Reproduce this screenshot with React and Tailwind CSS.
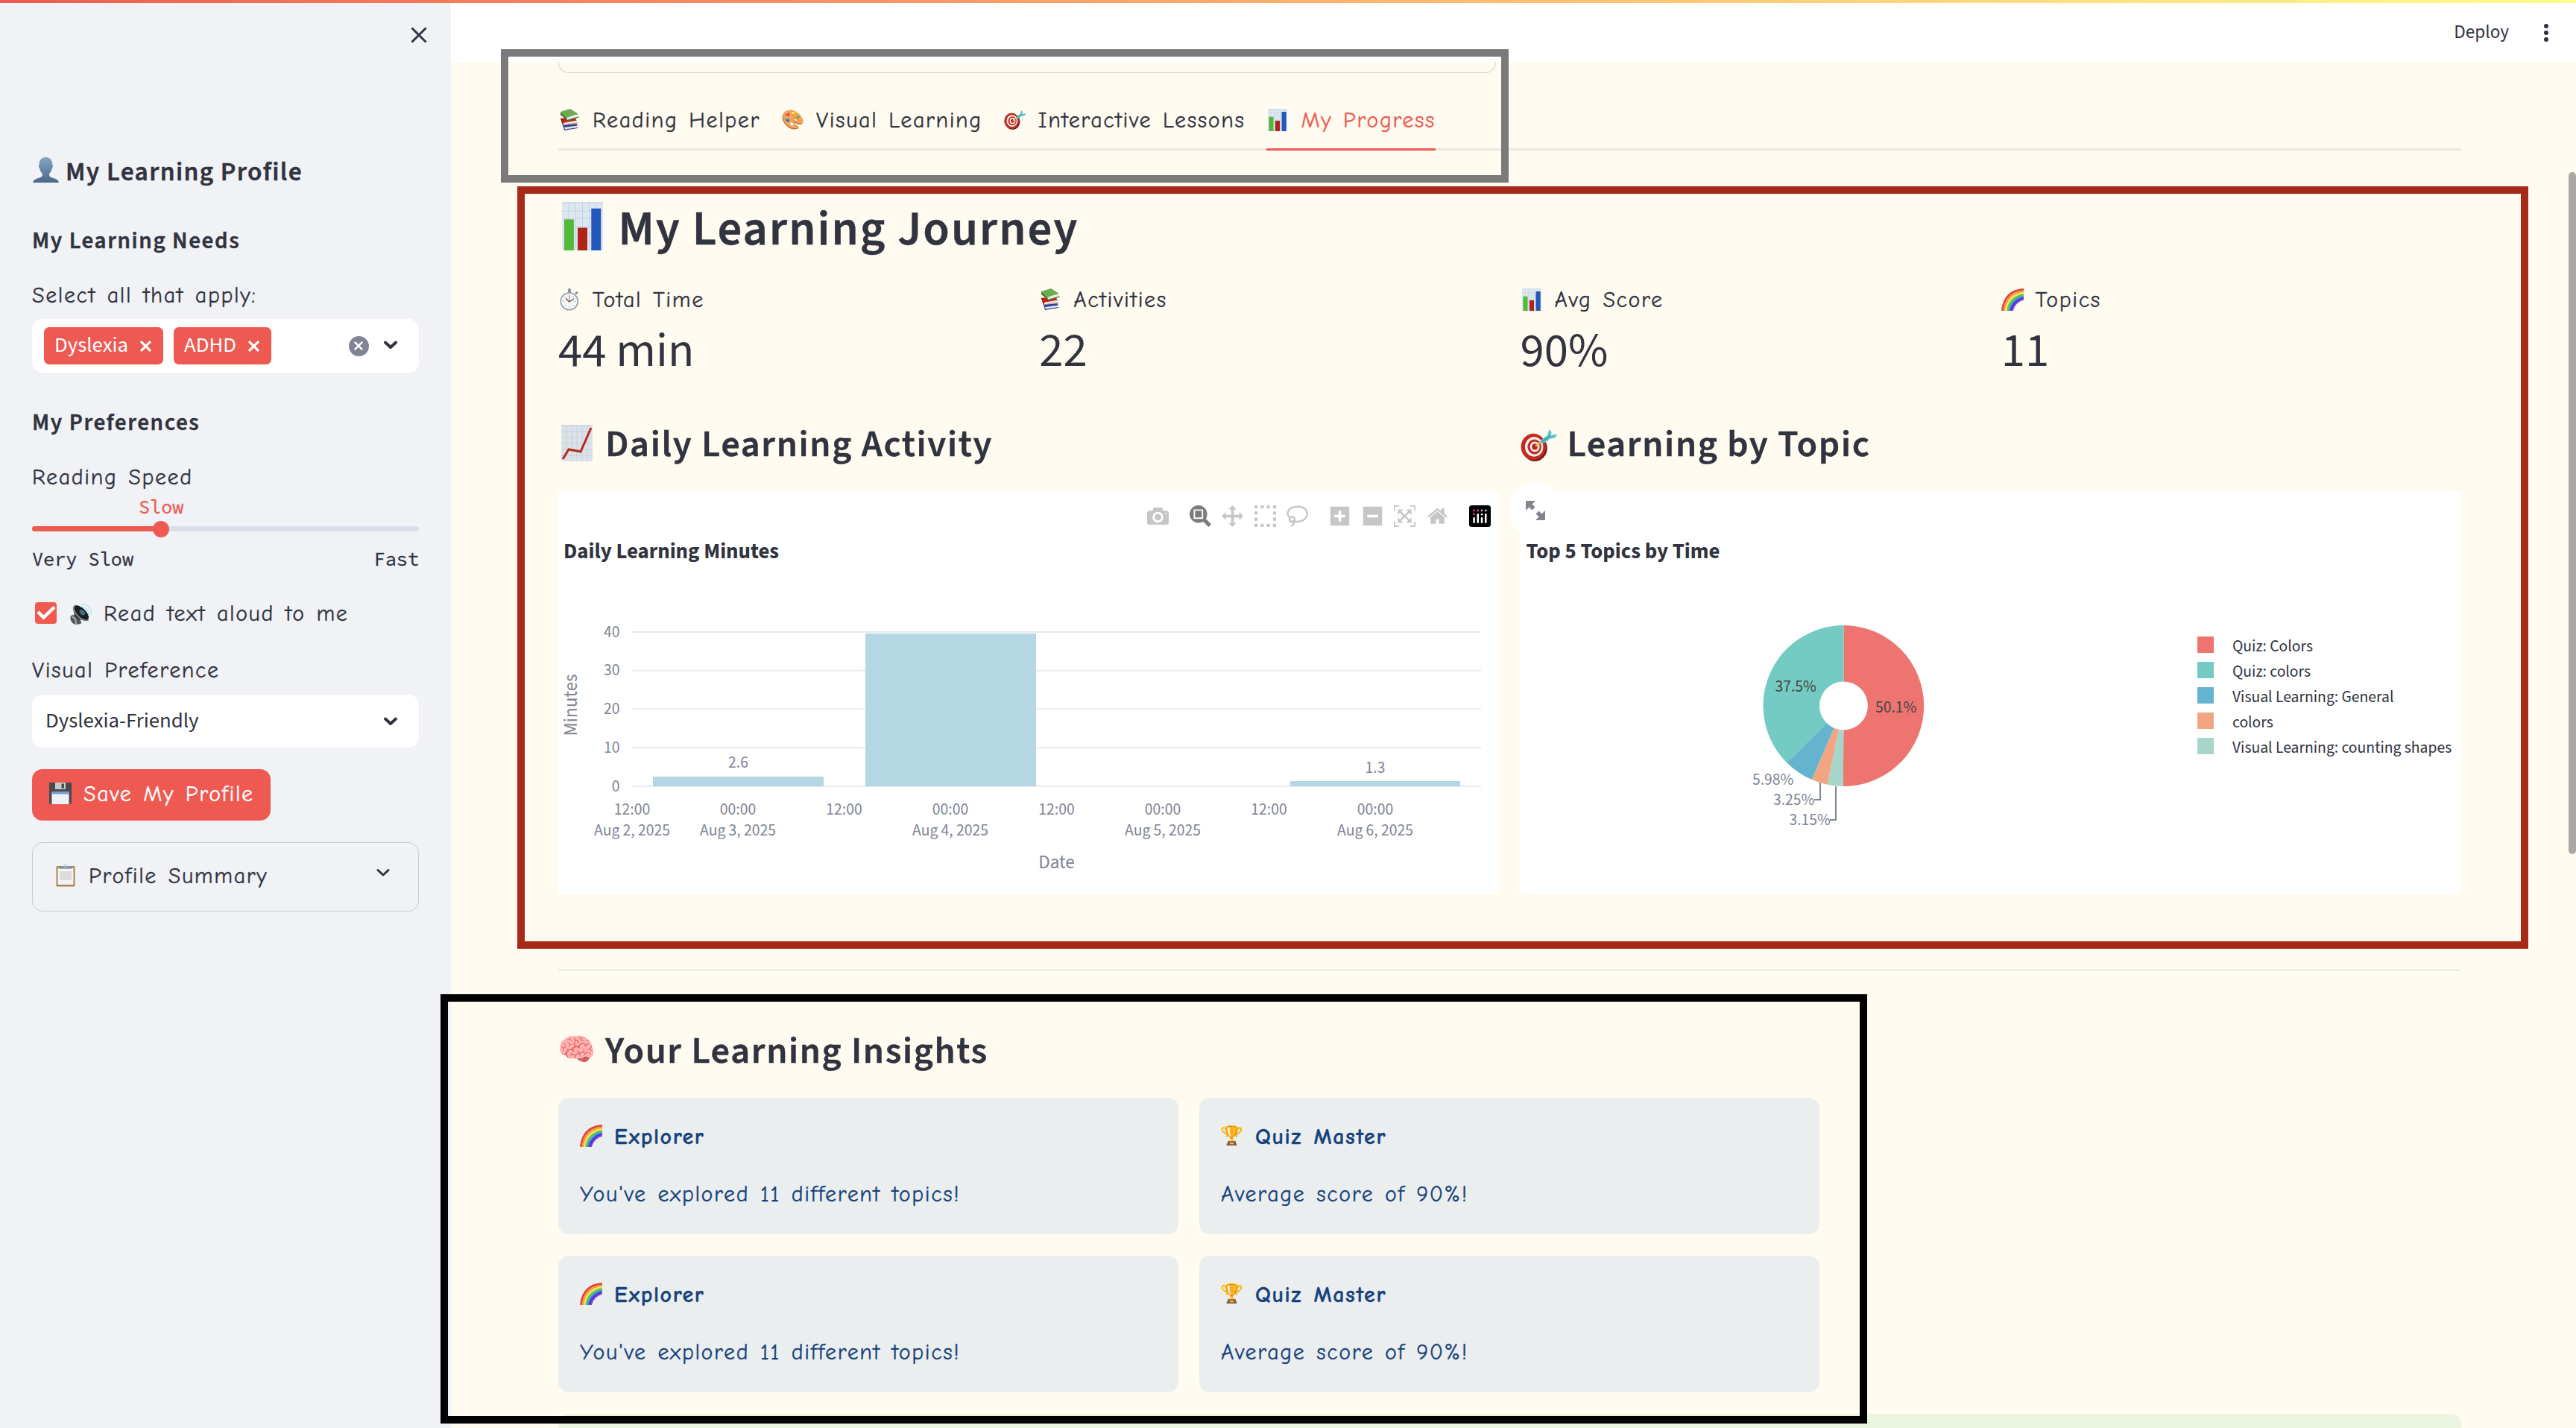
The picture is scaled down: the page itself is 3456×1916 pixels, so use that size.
import React from "react";

const COMIC = "font-['Comic_Neue','Lato',sans-serif] text-[30px] leading-[40px] tracking-[1.6px] [word-spacing:3.2px] [-webkit-text-stroke:0.3px] whitespace-nowrap";
const SANS = "font-['Source_Sans_3','Noto_Sans_CJK_SC',sans-serif] whitespace-nowrap";
const TITLE = SANS + " font-semibold [-webkit-text-stroke:0.4px]";
const MONO = "font-['Source_Code_Pro','Liberation_Mono',monospace] text-[25.2px] leading-[30px] whitespace-nowrap [-webkit-text-stroke:0.3px]";

/* ---------- emoji drawings ---------- */
function Bars({ className }) {
  return (
    <svg viewBox="0 0 28 32" className={className} preserveAspectRatio="none">
      <rect x="0" y="0" width="28" height="32" fill="#dfe7ee" />
      <path d="M0 .5H28M0 6H28M0 11H28M0 16H28M0 21H28M0 26H28M4.6 0V32M9.3 0V32M14 0V32M18.6 0V32M23.3 0V32" stroke="#bdd3e6" strokeWidth=".5" />
      <rect x="1.5" y="11.5" width="6.6" height="20.5" fill="#52b93a" />
      <rect x="10.7" y="17" width="6.6" height="15" fill="#b02318" />
      <rect x="20" y="4.3" width="6.6" height="27.7" fill="#2358b8" />
    </svg>
  );
}
function ChartUp({ className }) {
  return (
    <svg viewBox="0 0 42 49" className={className}>
      <rect width="42" height="49" fill="#dbe2ea" />
      <path d="M0 1H42M0 9H42M0 17H42M0 25H42M0 33H42M0 41H42M7 0V49M14 0V49M21 0V49M28 0V49M35 0V49" stroke="#c3cfdb" strokeWidth=".8" />
      <path d="M2 46 10 33 26 36 40 4" fill="none" stroke="#b52a1e" strokeWidth="3" />
    </svg>
  );
}
function Target({ className }) {
  return (
    <svg viewBox="0 0 50 44" className={className}>
      <ellipse cx="19" cy="26" rx="17" ry="18" fill="#7d1a14" />
      <ellipse cx="17" cy="24" rx="17" ry="18" fill="#c12c22" />
      <ellipse cx="18" cy="24" rx="12.5" ry="13.5" fill="#f7efec" />
      <ellipse cx="18.5" cy="24" rx="9.5" ry="10.2" fill="#c12c22" />
      <ellipse cx="19" cy="24" rx="6.6" ry="7" fill="#f7efec" />
      <ellipse cx="19" cy="24" rx="3.8" ry="4.2" fill="#b0251c" />
      <path d="M20 23 28 17" stroke="#e6c545" strokeWidth="2.4" />
      <path d="M26 19C27 14 32 11 36 9L39 0 42 4 41 8 49 7C50 11 44 13 39 13 36 17 31 20 26 19Z" fill="#5fc3cb" />
      <path d="M29 17 40 9" stroke="#2f8f9c" strokeWidth="1.2" />
    </svg>
  );
}
function Person({ className }) {
  return (
    <svg viewBox="0 0 35 34" className={className}>
      <defs>
        <linearGradient id="person" x1="0" y1="0" x2="0" y2="1">
          <stop offset="0" stopColor="#86a6c4" />
          <stop offset="1" stopColor="#4a678b" />
        </linearGradient>
      </defs>
      <path d="M17.5 0C23.5 0 26.5 4 26.3 10 27.5 10.5 27 14 25.8 15 25 19 23 21 22 22.5 22 25.5 23 26.5 26 27.5 31 29 34 30 35 34H0C1 30 4 29 9 27.5 12 26.5 13 25.5 13 22.5 12 21 10 19 9.2 15 8 14 7.5 10.5 8.7 10 8.5 4 11.5 0 17.5 0Z" fill="url(#person)" />
    </svg>
  );
}
function Speaker({ className }) {
  return (
    <svg viewBox="0 0 30 30" className={className}>
      <path d="M1 17C4 14 9 17 13 20L16 27C11 30 5 29 3 26 0 23 0 19 1 17Z" fill="#56575a" />
      <path d="M2.5 18.5C6 18 9 23 8 28" stroke="#b9babd" strokeWidth="1.8" fill="none" />
      <path d="M4 4 6 17 13 22 26 24Z" fill="#2c2e31" />
      <ellipse cx="15" cy="13" rx="14" ry="7" transform="rotate(45 15 13)" fill="#85898d" />
      <ellipse cx="15.8" cy="12.5" rx="12.7" ry="5.9" transform="rotate(45 15.8 12.5)" fill="#1b1e21" />
      <ellipse cx="17" cy="12" rx="4.5" ry="3" transform="rotate(45 17 12)" fill="#3a6f85" />
      <path d="M15 1C23-1 31 7 29 16M14 4C20 3 27 10 26 17" stroke="#b7e3ec" strokeWidth="1.3" fill="none" />
    </svg>
  );
}
function Floppy({ className }) {
  return (
    <svg viewBox="0 0 30 29" className={className}>
      <rect width="30" height="29" rx="1" fill="#4a4a4c" />
      <rect x="8" y="0" width="14" height="9" fill="#c9cacb" />
      <rect x="16.5" y="1.5" width="3.5" height="6" fill="#4a4a4c" />
      <rect x="3.5" y="12.5" width="23" height="16.5" fill="#eef1f5" />
      <rect x="3.5" y="12.5" width="23" height="3" fill="#6f9fdc" />
      <rect x="1" y="26" width="1.5" height="1.5" fill="#d34b3d" />
      <rect x="27.5" y="26" width="1.5" height="1.5" fill="#d34b3d" />
    </svg>
  );
}
function Clipboard({ className }) {
  return (
    <svg viewBox="0 0 26 30" className={className}>
      <rect x=".5" y="2" width="25" height="27.5" rx="1.5" fill="#a9854e" />
      <rect x="2.5" y="4.5" width="21" height="22.5" fill="#f4f4f4" />
      <path d="M5 9H21V21H5Z" fill="#dcdcdd" />
      <rect x="4" y="2" width="18" height="3.8" rx="1" fill="#8e9399" />
      <circle cx="13" cy="2" r="1.8" fill="none" stroke="#b3c3cf" strokeWidth="1" />
    </svg>
  );
}
function Books({ className }) {
  return (
    <svg viewBox="0 0 26 30" className={className}>
      <path d="M4 22 23 20 24 26 6 29Z" fill="#2e4390" />
      <path d="M6 25 24 22.5 24 25 7 27.5Z" fill="#e8e8ea" />
      <path d="M1 13 20 10 24 19 4 22Z" fill="#c3281e" />
      <path d="M4 19 24 15.5 24.5 18.5 5 21.5Z" fill="#ece9e4" />
      <path d="M1 13 4 22 5 20 3 13Z" fill="#8c1a13" />
      <path d="M1 4 14 0 25 7 9 12Z" fill="#6cab4f" />
      <path d="M9 12 25 7 25.5 10.5 10 15.5Z" fill="#eceee6" />
      <path d="M1 4 9 12 10 15.5 1 8Z" fill="#3f7a2c" />
      <path d="M9.5 15 25.5 10.3V11.5L10 16.5Z" fill="#3f7a2c" />
    </svg>
  );
}
function Stopwatch({ className }) {
  return (
    <svg viewBox="0 0 26 30" className={className}>
      <rect x="11" y="0" width="4" height="6" rx="1.5" fill="#8d949b" />
      <path d="M21 7 24 5" stroke="#7b8289" strokeWidth="2.5" />
      <circle cx="12.8" cy="17.3" r="12.3" fill="#9aa1a9" />
      <circle cx="12.8" cy="17.3" r="10.6" fill="#f5f6f8" />
      <path d="M12.8 8.500V10.500M12.8 24V26M4 17.3H6M19.6 17.3H21.6M6.6 11 8 12.4M19 11 17.6 12.4M6.6 23.6 8 22.2M19 23.6 17.6 22.2" stroke="#a8adb3" strokeWidth="1" />
      <path d="M12.8 18V9.5" stroke="#e08b5a" strokeWidth="1.2" />
      <path d="M8 13.5 12.8 18 19 14" stroke="#4b5056" strokeWidth="1.3" fill="none" />
    </svg>
  );
}
function Rainbow({ className }) {
  return (
    <svg viewBox="0 0 30 30" className={className} fill="none" strokeWidth="2.7">
      <path d="M1.3 30C3 13 12 2.5 30 1.3" stroke="#e24239" />
      <path d="M3.8 30C5.5 15 14 5 30 3.8" stroke="#f3973f" />
      <path d="M6.2 30C8 17 16 7.5 30 6.2" stroke="#f7e15a" />
      <path d="M8.6 30C10 19 17.5 10 30 8.6" stroke="#5ec944" />
      <path d="M11 30C12.5 21 19 12.5 30 11" stroke="#3c8fe8" />
      <path d="M13 30C14.5 22.5 20.5 14.5 30 13" stroke="#4a35d8" />
      <path d="M15 30C16 24 22 16.5 30 15" stroke="#8a3fd0" strokeWidth="1.6" />
    </svg>
  );
}
function Glyph({ children, className }) {
  return <span className={"font-['Noto_Color_Emoji'] flex items-center justify-center tracking-normal " + className}>{children}</span>;
}

/* ---------- small icons ---------- */
function Cross({ className, width }) {
  return (
    <svg viewBox="0 0 22 22" className={className} fill="none" stroke="currentColor" strokeWidth={width}>
      <path d="M1.5 1.5 20.5 20.5M20.5 1.5 1.5 20.5" />
    </svg>
  );
}
function Chevron({ className, width = 4 }) {
  return (
    <svg viewBox="0 0 20 12" className={className} fill="none" stroke="currentColor" strokeWidth={width} strokeLinecap="round" strokeLinejoin="round">
      <path d="M3 2.5 10 9 17 2.5" />
    </svg>
  );
}

/* ---------- chart toolbar ---------- */
function Tool({ d, w = 1000, active }) {
  return (
    <svg viewBox={`0 0 ${w} 1000`} className={active ? "w-[29px] h-[29px] fill-[#7b7b7c]" : "w-[29px] h-[29px] fill-[#c6c6c7]"}>
      <path d={d} transform="matrix(1 0 0 -1 0 850)" />
    </svg>
  );
}
const ICONS = {
  camera: "m500 450c-83 0-150-67-150-150 0-83 67-150 150-150 83 0 150 67 150 150 0 83-67 150-150 150z m400 150h-120c-16 0-34 13-39 29l-31 93c-6 15-23 28-40 28h-340c-16 0-34-13-39-28l-31-94c-6-15-23-28-40-28h-120c-55 0-100-45-100-100v-450c0-55 45-100 100-100h800c55 0 100 45 100 100v450c0 55-45 100-100 100z m-400-550c-138 0-250 112-250 250 0 138 112 250 250 250 138 0 250-112 250-250 0-138-112-250-250-250z m365 380c-19 0-35 16-35 35 0 19 16 35 35 35 19 0 35-16 35-35 0-19-16-35-35-35z",
  zoom: "m1000-25l-250 251c40 63 63 138 63 218 0 224-182 406-407 406-224 0-406-182-406-406s183-406 407-406c80 0 155 22 218 62l250-250 125 125z m-812 250l0 438 437 0 0-438-437 0z m62 375l313 0 0-312-313 0 0 312z",
  pan: "m1000 350l-187 188 0-125-250 0 0 250 125 0-188 187-187-187 125 0 0-250-250 0 0 125-188-188 186-187 0 125 252 0 0-250-125 0 187-188 188 188-125 0 0 250 250 0 0-126 187 188z",
  select: "m0 850l0-143 143 0 0 143-143 0z m286 0l0-143 143 0 0 143-143 0z m285 0l0-143 143 0 0 143-143 0z m286 0l0-143 143 0 0 143-143 0z m-857-286l0-143 143 0 0 143-143 0z m857 0l0-143 143 0 0 143-143 0z m-857-285l0-143 143 0 0 143-143 0z m857 0l0-143 143 0 0 143-143 0z m-857-286l0-143 143 0 0 143-143 0z m286 0l0-143 143 0 0 143-143 0z m285 0l0-143 143 0 0 143-143 0z m286 0l0-143 143 0 0 143-143 0z",
  plus: "m1 787l0-875 875 0 0 875-875 0z m687-500l-187 0 0-187-125 0 0 187-188 0 0 125 188 0 0 187 125 0 0-187 187 0 0-125z",
  minus: "m0 788l0-876 875 0 0 876-875 0z m688-500l-500 0 0 125 500 0 0-125z",
  auto: "m250 850l-187 0-63 0 0-62 0-188 63 0 0 188 187 0 0 62z m688 0l-188 0 0-62 188 0 0-188 62 0 0 188 0 62-62 0z m-875-938l0 188-63 0 0-188 0-62 63 0 187 0 0 62-187 0z m875 188l0-188-188 0 0-62 188 0 62 0 0 62 0 188-62 0z m-125 188l-1 0-93-94-156 156 156 156 92-93 2 0 0 250-250 0 0-2 93-92-156-156-156 156 94 92 0 2-250 0 0-250 0 0 93 93 157-156-157-156-93 94 0 0 0-250 250 0 0 0-94 93 156 157 156-157-93-93 0 0 250 0 0 250z",
  home: "m786 296v-267q0-15-11-26t-25-10h-214v214h-143v-214h-214q-15 0-25 10t-11 26v267q0 1 0 2t0 2l321 264 321-264q1-1 1-4z m124 39l-34-41q-5-5-12-6h-2q-7 0-12 3l-386 322-386-322q-7-4-13-4-7 2-12 7l-35 41q-4 5-3 13t6 12l401 334q18 15 42 15t43-15l136-114v109q0 8 5 13t13 5h107q8 0 13-5t5-13v-227l122-102q5-5 6-12t-4-13z",
};
function Toolbar() {
  return (
    <div className="absolute right-[12px] top-[19px] flex gap-[28px]">
      <Tool d={ICONS.camera} />
      <div className="flex gap-[14.5px]">
        <Tool d={ICONS.zoom} active />
        <Tool d={ICONS.pan} />
        <Tool d={ICONS.select} />
        <svg viewBox="0 0 29 29" className="h-[29px] w-[29px] fill-none stroke-[#c6c6c7]" strokeWidth="2.4">
          <path d="M6 17.5C2 15.5 1 11.5 2 8.5 4 3.5 10 1.5 16 1.7 23 2 28 6 27.7 11.5 27.4 18 21 22 14 22 11 22 9 21 7 20" />
          <circle cx="7.5" cy="19" r="3.6" />
          <path d="M10.5 21.5C11 24 9 26 6.5 28" />
        </svg>
      </div>
      <div className="flex gap-[14.5px]">
        <Tool d={ICONS.plus} w={875} />
        <Tool d={ICONS.minus} w={875} />
        <Tool d={ICONS.auto} />
        <Tool d={ICONS.home} w={928.571} />
      </div>
      <svg viewBox="0 0 29 29" className="h-[29px] w-[29px]">
        <rect width="29" height="29" rx="3.5" fill="#000" />
        <g fill="#e2467c">
          <circle cx="6.5" cy="7" r="1.4" />
          <circle cx="6.5" cy="12" r="1.4" />
          <circle cx="11.8" cy="7" r="1.4" />
        </g>
        <circle cx="17" cy="7" r="1.4" fill="#b9a3d6" />
        <circle cx="22.3" cy="7" r="1.4" fill="#8fd3f0" />
        <g fill="#fff">
          <rect x="5.3" y="16" width="2.5" height="8" rx="1.2" />
          <rect x="10.5" y="11" width="2.5" height="13" rx="1.2" />
          <rect x="15.8" y="16" width="2.5" height="8" rx="1.2" />
          <rect x="15.8" y="11" width="2.5" height="2.5" rx="1.2" />
          <rect x="21" y="11" width="2.5" height="13" rx="1.2" />
        </g>
      </svg>
    </div>
  );
}

/* ---------- charts ---------- */
const BARS = [
  { x: 127, w: 229, top: 383, label: "2.6", labelY: 371 },
  { x: 412, w: 229, top: 191 },
  { x: 982, w: 228, top: 389, label: "1.3", labelY: 378 },
];
const TICKS = [
  [99, "12:00", "Aug 2, 2025"],
  [241, "00:00", "Aug 3, 2025"],
  [383.5, "12:00"],
  [526, "00:00", "Aug 4, 2025"],
  [668.5, "12:00"],
  [811, "00:00", "Aug 5, 2025"],
  [953.5, "12:00"],
  [1096, "00:00", "Aug 6, 2025"],
];
const CHART = "block h-[540px] w-[1262px] font-['Source_Sans_3','Noto_Sans_CJK_SC',sans-serif]";
function BarChart() {
  return (
    <svg viewBox="0 0 1262 540" className={CHART}>
      <text x="7" y="90" className="fill-[#31333f] text-[28.8px] font-bold">Daily Learning Minutes</text>
      {[40, 30, 20, 10, 0].map((v, i) => (
        <g key={v}>
          <path d={`M99 ${189 + i * 51.75}H1238`} stroke="#e8eaf0" strokeWidth="2" />
          <text x="82.5" y={195.5 + i * 51.9} textAnchor="end" className="fill-[#808495] text-[21.6px]">{v}</text>
        </g>
      ))}
      {BARS.map((b) => (
        <g key={b.x}>
          <rect x={b.x} y={b.top} width={b.w} height={396 - b.top} fill="#b5d7e3" />
          {b.label && <text x={b.x + b.w / 2} y={b.labelY} textAnchor="middle" className="fill-[#808495] text-[21.6px]">{b.label}</text>}
        </g>
      ))}
      {TICKS.map(([x, time, date]) => (
        <g key={x} textAnchor="middle" className="fill-[#808495] text-[21.6px]">
          <text x={x} y="434">{time}</text>
          {date && <text x={x} y="462">{date}</text>}
        </g>
      ))}
      <text transform="translate(25 287) rotate(-90)" textAnchor="middle" className="fill-[#808495] text-[25.2px]">Minutes</text>
      <text x="668.5" y="506" textAnchor="middle" className="fill-[#808495] text-[25.2px]">Date</text>
    </svg>
  );
}
const SLICES = [
  [0, 180.36, "#ee7470"],
  [180.36, 191.7, "#a6d6c9"],
  [191.7, 203.4, "#f2a582"],
  [203.4, 225, "#65b4cf"],
  [225, 360, "#74cbc3"],
];
const LEGEND = [
  ["Quiz: Colors", "#ee7470"],
  ["Quiz: colors", "#74cbc3"],
  ["Visual Learning: General", "#65b4cf"],
  ["colors", "#f2a582"],
  ["Visual Learning: counting shapes", "#a6d6c9"],
];
function arc(a, b) {
  const p = (deg, r) => {
    const t = (deg * Math.PI) / 180;
    return `${(433.5 + r * Math.sin(t)).toFixed(2)} ${(288 - r * Math.cos(t)).toFixed(2)}`;
  };
  const big = b - a > 180 ? 1 : 0;
  return `M${p(a, 108)}A108 108 0 ${big} 1 ${p(b, 108)}L${p(b, 32.5)}A32.5 32.5 0 ${big} 0 ${p(a, 32.5)}Z`;
}
function PieChart() {
  return (
    <svg viewBox="0 0 1262 540" className={CHART}>
      <text x="7.5" y="90" className="fill-[#31333f] text-[28.8px] font-bold">Top 5 Topics by Time</text>
      {SLICES.map(([a, b, c]) => <path key={c} d={arc(a, b)} fill={c} />)}
      <g className="fill-[#444444] text-[21.6px]">
        <text x="341.5" y="269">37.5%</text>
        <text x="476" y="296.5">50.1%</text>
      </g>
      <g className="fill-[#808495] text-[21.6px]">
        <text x="311" y="394">5.98%</text>
        <text x="339" y="421">3.25%</text>
        <text x="360.5" y="448">3.15%</text>
      </g>
      <path d="M402 391V414H394M423 396V441H415" fill="none" stroke="#808495" strokeWidth="2" />
      {LEGEND.map(([t, c], i) => (
        <g key={t}>
          <rect x="908" y={195 + i * 34} width="22" height="22" fill={c} />
          <text x="955" y={215 + i * 34} className="fill-[#31333f] text-[21.6px]">{t}</text>
        </g>
      ))}
    </svg>
  );
}

/* ---------- sidebar ---------- */
function Tag({ children }) {
  return (
    <span className={SANS + " flex h-[50px] items-center gap-[16px] rounded-[7px] bg-[#ee5a52] pl-[14px] pr-[16px] text-[28.8px] leading-[50px] text-white"}>
      {children}
      <Cross className="h-[15px] w-[15px]" width={4.5} />
    </span>
  );
}
function Sidebar() {
  return (
    <aside className="flex h-full w-[605px] shrink-0 flex-col bg-[#f0f2f6] px-[43px] text-[#31333f]">
      <div className="flex h-[206px] justify-end pt-[36px]">
        <Cross className="-mr-[11px] h-[22px] w-[22px]" width={3} />
      </div>
      <h2 className={TITLE + " flex h-[50px] items-center gap-[8px] text-[35.5px] leading-[50px] tracking-[1.3px]"}>
        <Person className="mb-[6px] h-[34px] w-[37px]" />
        My Learning Profile
      </h2>
      <h3 className={TITLE + " mt-[47px] text-[31.2px] leading-[40px] tracking-[1.6px]"}>My Learning Needs</h3>
      <div className={COMIC + " mt-[34px]"}>Select all that apply:</div>
      <div className="mt-[11px] flex h-[72px] items-center rounded-[14px] bg-white pl-[16px] pr-[28px]">
        <div className="flex flex-1 gap-[14px]">
          <Tag>Dyslexia</Tag>
          <Tag>ADHD</Tag>
        </div>
        <span className="flex h-[27px] w-[27px] items-center justify-center rounded-full bg-[#808495]">
          <Cross className="h-[12px] w-[12px] text-white" width={4.5} />
        </span>
        <Chevron className="mb-[2px] ml-[19.5px] h-[12px] w-[20px]" />
      </div>
      <h3 className={TITLE + " mt-[47px] text-[31.2px] leading-[40px] tracking-[1.6px]"}>My Preferences</h3>
      <div className={COMIC + " mt-[34px]"}>Reading Speed</div>
      <div className={MONO + " mt-[4px] pl-[143px] text-[#ee5a52]"}>Slow</div>
      <div className="mt-[11px] flex h-[7px] items-center rounded-full bg-[#d9dee9]">
        <div className="h-[7px] w-[173px] rounded-l-full bg-[#ee5a52]" />
        <div className="-ml-[11px] h-[22px] w-[22px] shrink-0 rounded-full bg-[#ee5a52]" />
      </div>
      <div className={MONO + " mt-[22px] flex justify-between"}>
        <span>Very Slow</span>
        <span>Fast</span>
      </div>
      <div className={COMIC + " mt-[39px] flex items-center"}>
        <span className="mb-[4px] ml-[4px] flex h-[29px] w-[29px] items-center justify-center rounded-[4px] bg-[#ee5a52]">
          <svg viewBox="0 0 26 20" className="h-[20px] w-[26px]" fill="none" stroke="#fff" strokeWidth="4.5">
            <path d="M2 9 9.5 16.5 24 2.5" />
          </svg>
        </span>
        <Speaker className="ml-[18px] h-[29px] w-[29px]" />
        <span className="ml-[16px]">Read text aloud to me</span>
      </div>
      <div className={COMIC + " mt-[36px]"}>Visual Preference</div>
      <div className={SANS + " mt-[12px] flex h-[71px] items-center justify-between rounded-[14px] bg-white pl-[18px] pr-[28px] text-[28.8px] leading-[71px]"}>
        Dyslexia-Friendly
        <Chevron className="h-[12px] w-[20px]" />
      </div>
      <button className={COMIC + " mt-[29px] flex h-[69px] w-[320px] items-center gap-[16px] rounded-[14px] bg-[#ee5a52] pb-[1px] pl-[23px] font-normal text-white"}>
        <Floppy className="mb-[4px] h-[29px] w-[30px]" />
        Save My Profile
      </button>
      <div className={COMIC + " mt-[29px] flex h-[93px] items-center rounded-[14px] border border-[#cbccd2] pb-[1px] pl-[31px] pr-[37px]"}>
        <Clipboard className="mb-[3px] h-[30px] w-[26px]" />
        <span className="ml-[18px] flex-1">Profile Summary</span>
        <Chevron className="mb-[11px] h-[12px] w-[20px]" width={3} />
      </div>
    </aside>
  );
}

/* ---------- main column ---------- */
function Tab({ icon, children, active }) {
  return (
    <div className={active ? "flex items-start gap-[16px] border-b-[3px] border-[#ee5a52] text-[#ee5a52]" : "flex items-start gap-[16px]"}>
      <span className="flex h-[40px] w-[30px] items-center justify-center">{icon}</span>
      <span className="pt-px">{children}</span>
    </div>
  );
}
function Metric({ icon, label, value }) {
  return (
    <div>
      <div className={COMIC + " flex items-center gap-[16px]"}>
        <span className="mb-[2px] flex h-[36px] w-[30px] items-center justify-center">{icon}</span>
        {label}
      </div>
      <div className={SANS + " mt-[8px] text-[64.8px] leading-[80px]"}>{value}</div>
    </div>
  );
}
function Heading({ icon, children }) {
  return (
    <h3 className={TITLE + " flex h-[60px] items-center text-[50.4px] leading-[60px] tracking-[1.6px]"}>
      <span className="mb-[4px] flex w-[63px]">{icon}</span>
      {children}
    </h3>
  );
}
function Insight({ icon, title, children }) {
  return (
    <div className={COMIC + " flex h-[183px] flex-col gap-[37px] rounded-[14px] bg-[#eaeeee] pl-[29px] pt-[33px] text-[#17427d]"}>
      <div className="flex items-center gap-[16px] font-bold">
        <span className="mb-[4px] flex w-[30px] justify-center">{icon}</span>
        {title}
      </div>
      <p>{children}</p>
    </div>
  );
}
function Insights() {
  return (
    <div className="mt-[33px] grid w-[1692px] grid-cols-2 gap-x-[28px] gap-y-[29px]">
      {[0, 1].map((row) => (
        <React.Fragment key={row}>
          <Insight icon={<Rainbow className="h-[30px] w-[30px]" />} title="Explorer">You've explored 11 different topics!</Insight>
          <Insight icon={<Glyph className="h-[30px] w-[30px] text-[25px]">🏆</Glyph>} title="Quiz Master">Average score of 90%!</Insight>
        </React.Fragment>
      ))}
    </div>
  );
}

export default function App() {
  return (
    <div className="relative flex h-[1916px] w-[3456px] overflow-hidden bg-[#fffbf0] text-[#31333f]">
      <Sidebar />
      <main className="flex flex-1 flex-col">
        <header className={SANS + " flex h-[83px] shrink-0 items-center justify-end bg-white pr-[37px] pt-[4px] text-[25.2px]"}>
          Deploy
          <svg viewBox="0 0 6 24" className="ml-[47px] h-[24px] w-[6px]" fill="#31333f">
            <circle cx="3" cy="3" r="3" />
            <circle cx="3" cy="12" r="3" />
            <circle cx="3" cy="21" r="3" />
          </svg>
        </header>
        <div className="ml-[144px] w-[2553px]">
          <div className="h-[15px] w-[1258px] rounded-b-[14px] border-x border-b border-[#d3d2cb]" />
          <nav className={COMIC + " mt-[43px] flex h-[61px] gap-[29px] shadow-[inset_0_-3px_0_#e7e6df]"}>
            <Tab icon={<Books className="h-[30px] w-[26px]" />}>Reading Helper</Tab>
            <Tab icon={<Glyph className="text-[25px]">🎨</Glyph>}>Visual Learning</Tab>
            <Tab icon={<Target className="h-[26px] w-[30px]" />}>Interactive Lessons</Tab>
            <Tab icon={<Bars className="h-[30px] w-[26px]" />} active>My Progress</Tab>
          </nav>
          <h1 className={TITLE + " mt-[66px] flex h-[80px] items-center text-[64.8px] leading-[80px] tracking-[2px]"}>
            <span className="mb-[9px] flex w-[80.5px] pl-[5px]"><Bars className="h-[65px] w-[55px]" /></span>
            My Learning Journey
          </h1>
          <div className="mt-[35px] grid grid-cols-4 gap-[28px]">
            <Metric icon={<Stopwatch className="h-[30px] w-[26px]" />} label="Total Time" value="44 min" />
            <Metric icon={<Books className="h-[30px] w-[26px]" />} label="Activities" value="22" />
            <Metric icon={<Bars className="h-[30px] w-[26px]" />} label="Avg Score" value="90%" />
            <Metric icon={<Rainbow className="h-[30px] w-[30px]" />} label="Topics" value="11" />
          </div>
          <div className="mt-[55px] grid grid-cols-2 gap-[28px]">
            <section>
              <Heading icon={<ChartUp className="ml-[4px] h-[49px] w-[42px]" />}>Daily Learning Activity</Heading>
              <div className="relative mt-[33px] bg-white">
                <BarChart />
                <Toolbar />
              </div>
            </section>
            <section>
              <Heading icon={<Target className="mt-[6px] h-[43px] w-[50px]" />}>Learning by Topic</Heading>
              <div className="relative mt-[33px] bg-white">
                <span className="absolute -left-[16px] -top-[11px] flex h-[73px] w-[73px] items-center justify-center rounded-full bg-white">
                  <svg viewBox="0 0 26 26" className="h-[26px] w-[26px]" fill="#84858c">
                    <path d="M0 0H13L8.5 4.5 12.5 8.5 8.5 12.5 4.5 8.5 0 13ZM26 26H13L17.5 21.5 13.5 17.5 17.5 13.5 21.5 17.5 26 13Z" />
                  </svg>
                </span>
                <div className="relative"><PieChart /></div>
              </div>
            </section>
          </div>
          <hr className="mt-[102px] border-t border-[#d6d4cd]" />
          <div className="mt-[78px]">
            <Heading icon={<Glyph className="h-[44px] w-[50px] text-[41px]">🧠</Glyph>}>Your Learning Insights</Heading>
          </div>
          <Insights />
          <div className="mt-[29px] h-[60px] rounded-[14px] bg-[#ebf5e0]" />
        </div>
      </main>

      <div className="absolute left-0 top-0 h-1 w-full bg-gradient-to-r from-[#ee5a52] to-[#fffd8c]" />
      <div className="absolute right-0 top-[231px] h-[915px] w-[10px] rounded-full bg-[#a9a8a5]" />
      <div className="absolute left-[672px] top-[66px] h-[179px] w-[1352px] border-[10px] border-[#7a7a7a]" />
      <div className="absolute left-[694px] top-[250px] h-[1023px] w-[2698px] border-[10px] border-[#a52a17]" />
      <div className="absolute left-[591px] top-[1334px] h-[576px] w-[1914px] border-[10px] border-black" />
    </div>
  );
}
